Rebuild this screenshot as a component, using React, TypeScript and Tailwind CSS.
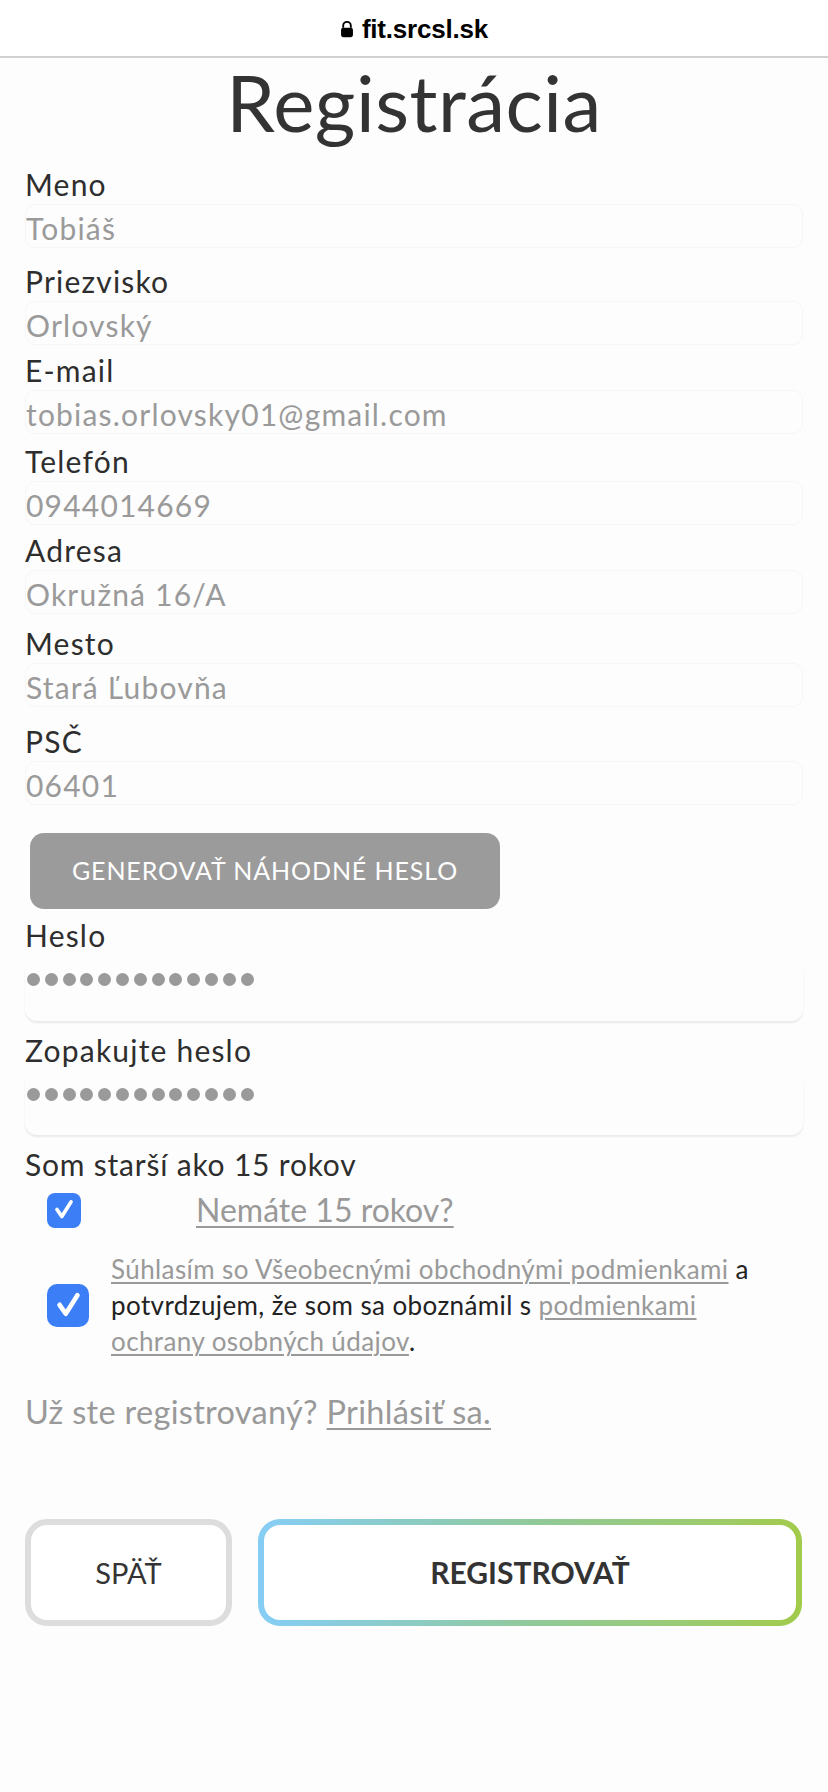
import React from "react";

const FIELDS = [
  { label: "Meno", value: "Tobiáš", mt: "mt-[20px]" },
  { label: "Priezvisko", value: "Orlovský", mt: "mt-[15px]" },
  { label: "E-mail", value: "tobias.orlovsky01@gmail.com", mt: "mt-[7px]" },
  { label: "Telefón", value: "0944014669", mt: "mt-[9px]" },
  { label: "Adresa", value: "Okružná 16/A", mt: "mt-[7px]" },
  { label: "Mesto", value: "Stará Ľubovňa", mt: "mt-[11px]" },
  { label: "PSČ", value: "06401", mt: "mt-[16px]" },
];

const Check = ({ size }: { size: "sm" | "lg" }) => (
  <div
    className={
      size === "sm"
        ? "w-[34px] h-[35px] rounded-[8px] bg-[#3b7ef6] flex items-center justify-center shrink-0"
        : "w-[42px] h-[43px] rounded-[10px] bg-[#3b7ef6] flex items-center justify-center shrink-0"
    }
  >
    <svg
      viewBox="0 0 24 24"
      className={size === "sm" ? "w-[26px] h-[26px]" : "w-[33px] h-[33px]"}
      fill="none"
      stroke="white"
      strokeWidth={3.4}
      strokeLinecap="round"
      strokeLinejoin="round"
    >
      <path d="M5.5 11.5l4.5 6.5L18.5 4.5" />
    </svg>
  </div>
);

const Dots = () => (
  <div className="flex gap-[4.8px] items-center">
    {Array.from({ length: 13 }).map((_, i) => (
      <span key={i} className="w-[13px] h-[13px] rounded-full bg-[#9a9a9a]" />
    ))}
  </div>
);

export default function App() {
  return (
    <div
      className="w-[828px] min-h-[1792px] bg-[#fdfdfd] text-[#333]"
      style={{ fontFamily: "Lato, 'Noto Sans', sans-serif" }}
    >
      {/* browser url bar */}
      <div className="h-[58px] border-b-2 border-[#d0d0d0] bg-white flex items-center justify-center gap-[8px] pt-[2px]">
        <svg viewBox="0 0 16 20" className="w-[14px] h-[17px]" fill="#000">
          <path d="M3.5 8V5.5a4.5 4.5 0 0 1 9 0V8" fill="none" stroke="#000" strokeWidth={2.2} />
          <rect x="1" y="8" width="14" height="11" rx="2.5" />
        </svg>
        <span
          className="text-[26px] font-semibold text-black tracking-[-0.2px]"
          style={{ fontFamily: "'Liberation Sans', Arial, sans-serif" }}
        >
          fit.srcsl.sk
        </span>
      </div>

      <div className="px-[25px]">
        <h1 className="h-[88px] flex items-center justify-center text-[78px] leading-none text-[#333] tracking-[0.5px]">
          Registrácia
        </h1>

        {FIELDS.map((f) => (
          <div key={f.label} className={f.mt}>
            <div className="h-[36px] flex items-center text-[30px] tracking-[1.2px] text-[#2e2e2e]">{f.label}</div>
            <div className="mt-[2px] h-[44px] pt-[4px] rounded-[10px] border border-[#f6f6f6] flex items-center text-[30px] tracking-[1.2px] text-[#9a9a9a]">
              {f.value}
            </div>
          </div>
        ))}

        <button className="mt-[28px] ml-[5px] w-[470px] h-[76px] rounded-[14px] bg-[#9b9b9b] text-white text-[25px] uppercase tracking-[0.9px]">
          Generovať náhodné heslo
        </button>

        <div className="h-[36px] mt-[8px] flex items-center text-[30px] tracking-[1.2px] text-[#2e2e2e]">Heslo</div>
        <div className="mt-[5px] h-[63px] rounded-[12px] bg-[#fdfdfd] shadow-[0_2px_2px_rgba(0,0,0,0.08)] pt-[15px] pl-[2px]">
          <Dots />
        </div>

        <div className="h-[36px] mt-[11px] flex items-center text-[30px] tracking-[1.2px] text-[#2e2e2e]">Zopakujte heslo</div>
        <div className="mt-[3px] h-[64px] rounded-[12px] bg-[#fdfdfd] shadow-[0_2px_2px_rgba(0,0,0,0.08)] pt-[17px] pl-[2px]">
          <Dots />
        </div>

        <div className="h-[36px] mt-[11px] flex items-center text-[30px] tracking-[0.8px] text-[#2e2e2e]">Som starší ako 15 rokov</div>
        <div className="mt-[4px] flex items-center pl-[22px]">
          <Check size="sm" />
          <a className="ml-[115px] text-[32px] text-[#999] underline decoration-[2px] underline-offset-[4px]">
            Nemáte 15 rokov?
          </a>
        </div>

        <div className="mt-[17px] flex items-center pl-[22px]">
          <Check size="lg" />
          <p className="ml-[22px] w-[650px] text-[26px] leading-[36px] tracking-[0.4px] text-[#222]">
            <a className="text-[#999] underline decoration-[1.5px] underline-offset-[3px]">
              Súhlasím so Všeobecnými obchodnými podmienkami
            </a>{" "}
            a potvrdzujem, že som sa oboznámil s{" "}
            <a className="text-[#999] underline decoration-[1.5px] underline-offset-[3px]">
              podmienkami ochrany osobných údajov
            </a>
            .
          </p>
        </div>

        <p className="mt-[29px] text-[32.5px] tracking-[0.3px] text-[#999]">
          Už ste registrovaný?{" "}
          <a className="underline decoration-[2px] underline-offset-[4px]">Prihlásiť sa.</a>
        </p>

        <div className="mt-[82px] flex gap-[26px] pr-[1px]">
          <button className="w-[207px] h-[107px] rounded-[22px] border-[6px] border-[#dddddd] bg-white text-[29px] text-[#333] uppercase">
            Späť
          </button>
          <div className="flex-1 h-[107px] rounded-[22px] p-[6px] bg-gradient-to-r from-[#86cdf6] via-[#90c99a] to-[#a2cb4a]">
            <button className="w-full h-full rounded-[16px] bg-white text-[30px] font-bold text-[#333] uppercase">
              Registrovať
            </button>
          </div>
        </div>
      </div>
    </div>
  );
}
